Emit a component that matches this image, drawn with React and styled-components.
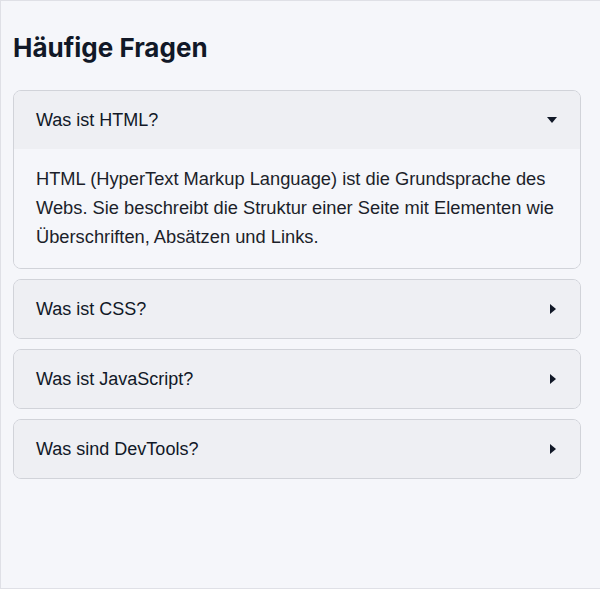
import React, { useState } from "react";
import styled, { createGlobalStyle } from "styled-components";

const Global = createGlobalStyle`
  html, body { margin: 0; padding: 0; background: #f5f6fa; }
  * { box-sizing: border-box; }
  body { font-family: "Liberation Sans", Arial, Helvetica, sans-serif; color: #111827; }
`;

const Page = styled.main`
  min-height: 589px;
  border-top: 1px solid #dfe0e6;
  border-left: 1px solid #dfe0e6;
  border-bottom: 1px solid #dfe0e6;
  padding: 31px 19px 0 12px;
  background: #f5f6fa;
`;

const Title = styled.h1`
  margin: 0 0 26px;
  font-family: Inter, "Liberation Sans", Arial, sans-serif;
  font-size: 26px;
  line-height: 32px;
  font-weight: 700;
  letter-spacing: 0;
  color: #111827;
`;

const List = styled.div`
  display: flex;
  flex-direction: column;
  gap: 10px;
`;

const Item = styled.section`
  border: 1px solid #d1d3d9;
  border-radius: 8px;
  overflow: hidden;
  background: #f5f6fa;
`;

const Summary = styled.button`
  all: unset;
  display: flex;
  align-items: center;
  justify-content: space-between;
  width: 100%;
  box-sizing: border-box;
  height: 58px;
  padding: 0 23px 0 22px;
  background: #eeeff3;
  font-family: "Liberation Sans", Arial, sans-serif;
  font-size: 18px;
  color: #111827;
  cursor: pointer;
`;

const Arrow = styled.span`
  display: block;
  width: 0;
  height: 0;
  ${(p) =>
    p.$open
      ? `border-left: 5px solid transparent; border-right: 5px solid transparent; border-top: 6px solid #111827;`
      : `border-top: 5px solid transparent; border-bottom: 5px solid transparent; border-left: 6px solid #111827; margin-right: 1px;`}
`;

const Answer = styled.div`
  padding: 15px 22px 17px 22px;
  font-family: "Liberation Sans", Arial, sans-serif;
  font-size: 18.3px;
  line-height: 29px;
  color: #1c1f2a;
  background: #f5f6fa;
`;

const faqs = [
  {
    q: "Was ist HTML?",
    a: "HTML (HyperText Markup Language) ist die Grundsprache des Webs. Sie beschreibt die Struktur einer Seite mit Elementen wie Überschriften, Absätzen und Links.",
  },
  {
    q: "Was ist CSS?",
    a: "CSS (Cascading Style Sheets) bestimmt das Aussehen einer Seite: Farben, Schriften, Abstände und Layout.",
  },
  {
    q: "Was ist JavaScript?",
    a: "JavaScript ist die Programmiersprache des Webs und macht Seiten interaktiv.",
  },
  {
    q: "Was sind DevTools?",
    a: "DevTools sind Entwicklerwerkzeuge im Browser, mit denen man Seiten untersuchen und debuggen kann.",
  },
];

export default function App() {
  const [open, setOpen] = useState(0);
  return (
    <>
      <Global />
      <Page>
        <Title>Häufige Fragen</Title>
        <List>
          {faqs.map((f, i) => (
            <Item key={f.q}>
              <Summary onClick={() => setOpen(open === i ? -1 : i)}>
                <span>{f.q}</span>
                <Arrow $open={open === i} />
              </Summary>
              {open === i && <Answer>{f.a}</Answer>}
            </Item>
          ))}
        </List>
      </Page>
    </>
  );
}
